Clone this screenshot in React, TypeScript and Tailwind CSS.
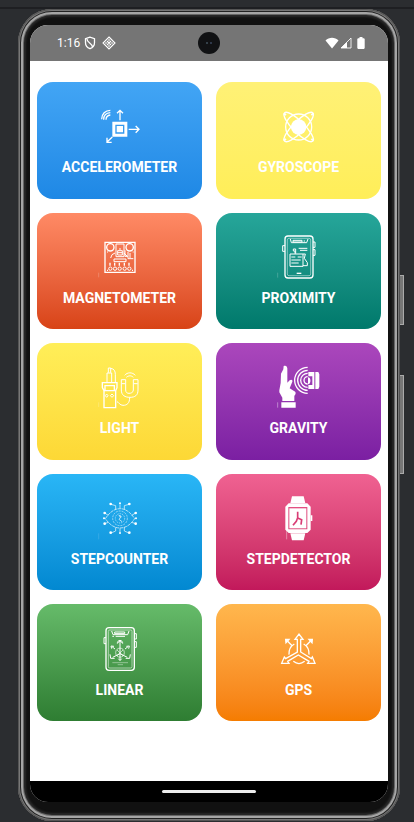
import type { ReactNode } from "react";

type Sensor = {
  name: string;
  tint: string;
  viewBox: string;
  art: ReactNode;
};

const sensors: Sensor[] = [
  {
    name: "ACCELEROMETER",
    tint: "from-[#42a5f5] to-[#1e88e5]",
    viewBox: "17 16 144 144",
    art: (
      <>
        <path fill="currentColor" stroke="none" fillRule="evenodd" d="M66 72h45v45H66zM75 81v27h27V81z" />
        <path fill="currentColor" stroke="none" d="M79 85h19v19H79z" />
        <path d="M89 68V38M80 47l9-9 9 9M115 95h31M136 85l10 10-10 10M66 118l-16 15M50 120v14h14" />
        <path d="M34 65c0-16 11-27 26-27M40 66c0-12 8-20 20-21M47 66c0-8 5-13 13-14" />
      </>
    ),
  },
  {
    name: "GYROSCOPE",
    tint: "from-[#fff176] to-[#ffee58]",
    viewBox: "20 16 144 144",
    art: (
      <>
        <circle cx="91" cy="88" r="23" fill="currentColor" stroke="none" />
        <circle cx="91" cy="88" r="39" />
        <ellipse cx="91" cy="88" rx="60" ry="17" transform="rotate(45 91 88)" />
        <ellipse cx="91" cy="88" rx="60" ry="17" transform="rotate(-45 91 88)" />
        <path d="M46 47l7 5M136 47l-7 5M46 129l7-5M136 129l-7-5" strokeWidth="6" />
      </>
    ),
  },
  {
    name: "MAGNETOMETER",
    tint: "from-[#ff8a65] to-[#d84315]",
    viewBox: "17 13 144 144",
    art: (
      <>
        <path d="M44 38h90v90H44z" />
        <circle cx="60" cy="53" r="11" />
        <circle cx="118" cy="53" r="11" />
        <path d="M77 43h24v38H77zM82 63h14v13H82zM82 69h14M86 58h6M50 67h3M127 67h3M61 85l4-10 9-5M71 88h36v8H71zM104 62v18h9v7h16M101 70l9 9M113 67v13M119 70v15" strokeWidth="3" />
        <path d="M59 99v9M73 99v9M87 99v9M102 99v9M116 99v9" />
        <g strokeWidth="3">
          <circle cx="60" cy="117" r="5" /><circle cx="74" cy="117" r="5" />
          <circle cx="88" cy="117" r="5" /><circle cx="103" cy="117" r="5" />
          <circle cx="117" cy="117" r="5" />
        </g>
        <path d="M50 122h3M125 122h3" />
        <path d="M25 129v14" strokeWidth="2" opacity=".3" />
      </>
    ),
  },
  {
    name: "PROXIMITY",
    tint: "from-[#26a69a] to-[#00796b]",
    viewBox: "20 13 144 144",
    art: (
      <>
        <rect x="50" y="19" width="84" height="126" rx="9" />
        <rect x="57" y="26" width="70" height="112" rx="5" strokeWidth="2" opacity=".7" />
        <path d="M50 48h-7v17h7M134 37h6v16h-6M134 60h6v17h-6M66 28l3 11h46l4-11M74 32h27v5H74zM106 34h4M91 56h26M95 62h22" strokeWidth="3" />
        <path d="M65 73h39v37H65zM69 82h12M88 82h12M69 91h28M69 100h22M104 73h7l-3 13 9 13v9h-13M80 72v-8h-5v-6h7v14" strokeWidth="3" />
        <path d="M85 131h14" />
        <path d="M28 129v15" strokeWidth="2" opacity=".3" />
      </>
    ),
  },
  {
    name: "LIGHT",
    tint: "from-[#ffee58] to-[#fdd835]",
    viewBox: "17 15 144 144",
    art: (
      <>
        <path d="M36 71h44v15l-4 9v51H41V95l-5-9zM44 80h28v15H44z" />
        <path d="M50 70V42h14v28M54 41V27h7v14M61 28c10 1 14 8 14 18v24" strokeWidth="3" />
        <path d="M49 105l4 5-4 5-4-5zM65 105l5 5-5 5-5-5z" strokeWidth="3" />
        <path d="M93 62h13v31c0 8 5 10 10 10s13-2 13-10V62h14v31c0 16-9 22-24 22S93 109 93 93zM94 74h11M130 74h12" strokeWidth="3" />
        <path d="M103 49c8-10 23-10 32 0M108 55c7-6 15-6 21 0M118 115c0 18-8 24-20 24-10 0-12-9-18-11" strokeWidth="3" />
        <path d="M25 130v14" strokeWidth="2" opacity=".3" />
      </>
    ),
  },
  {
    name: "GRAVITY",
    tint: "from-[#ab47bc] to-[#7b1fa2]",
    viewBox: "20 15 144 144",
    art: (
      <>
        <path fill="currentColor" stroke="none" d="M46 21c8-3 12 3 11 11v39l7-7c4-4 10-2 8 4l-8 20 13 8c8 4 5 10 1 15v15H42v-10l-9-16V94l4-22 1-28 7-13zM39 130h43v16H39z" />
        <path d="M118 25a39 39 0 0 0 0 78M118 34a30 30 0 0 0 0 60M118 43a21 21 0 0 0 0 42M118 53a11 11 0 0 0 0 22" strokeWidth="4" />
        <path fill="currentColor" stroke="none" d="M120 39h18v51h-18V78h12V52h-12zM141 39h9l3 7v37l-3 7h-9zM119 55c10 0 10 21 0 21z" />
        <path d="M28 130v16" strokeWidth="2" opacity=".6" />
      </>
    ),
  },
  {
    name: "STEPCOUNTER",
    tint: "from-[#29b6f6] to-[#0288d1]",
    viewBox: "17 17 144 144",
    art: (
      <>
        <g strokeWidth="2">
          <path d="M45 88c12-18 26-30 44-30s32 12 44 30c-12 18-26 28-44 28S57 105 45 88z" strokeDasharray="10 2" />
          <circle cx="89" cy="87" r="22" strokeDasharray="6 3" opacity=".8" />
          <circle cx="89" cy="87" r="14" strokeDasharray="4 3" opacity=".8" />
          <path d="M85 78l8 4-7 8 9 7M89 77v7" />
          <path d="M89 57V45M89 117v11M76 61V49l-14-4M102 61V49l14-4M76 114v11l-14 6M102 114v11l14 6M54 78l-11-7M124 78l12-7M54 99l-11 4M124 99l12 4" />
          <g fill="currentColor" stroke="none">
            <circle cx="89" cy="42" r="3" /><circle cx="61" cy="44" r="4" /><circle cx="117" cy="44" r="4" />
            <circle cx="89" cy="131" r="3" /><circle cx="61" cy="130" r="4" /><circle cx="117" cy="130" r="4" />
            <circle cx="43" cy="71" r="4" /><circle cx="136" cy="71" r="4" /><circle cx="43" cy="103" r="4" /><circle cx="136" cy="103" r="4" />
            <circle cx="41" cy="87" r="3" /><circle cx="137" cy="87" r="3" />
          </g>
        </g>
        <path d="M25 132v18" strokeWidth="2" opacity=".2" />
      </>
    ),
  },
  {
    name: "STEPDETECTOR",
    tint: "from-[#f06292] to-[#c2185b]",
    viewBox: "554 17 144 144",
    art: (
      <>
        <path fill="currentColor" stroke="none" d="M605 21h35l5 21h-45zM600 132h45l-5 21h-35zM661 78h5v17h-5z" />
        <path fill="currentColor" stroke="none" fillRule="evenodd" d="M595 42h56l10 10v69l-10 10h-56l-10-10V52zM594 53v67h57V53z" />
        <path d="M597 57h51v60h-51z" fill="currentColor" stroke="none" />
        <path d="M622 67v18l-4 11-10 12M622 86l12 5-2 15" stroke="#d93d75" strokeWidth="5" />
        <path d="M589 120v30" strokeWidth="2" opacity=".6" />
      </>
    ),
  },
  {
    name: "LINEAR",
    tint: "from-[#66bb6a] to-[#2e7d32]",
    viewBox: "17 20 144 144",
    art: (
      <>
        <rect x="47" y="25" width="85" height="128" rx="9" />
        <rect x="54" y="32" width="71" height="114" rx="4" strokeWidth="2" opacity=".8" />
        <path d="M47 55h-6v18h6M132 43h6v16h-6M132 67h6v17h-6M64 35l4 11h44l4-11M73 38h30v5H73zM76 51h28M66 51h5" strokeWidth="3" />
        <path d="M89 104V65M81 73c-1-13 17-13 16 0M84 70l5-6 5 6M89 103l-22 11M89 103l22 11M74 89l-9-7M104 89l9-7M64 88l-2-8 9 1M115 88l2-8-9 1M89 104v18M84 118l5 6 5-6M59 105l2 12h12M120 105l-2 12h-12" strokeWidth="3" />
        <path d="M76 100c0-18 26-18 26 0s-26 18-26 0M80 92l18 17M98 92l-18 17" strokeWidth="2" />
        <path d="M66 130h47M82 136h16" strokeWidth="2" opacity=".6" />
      </>
    ),
  },
  {
    name: "GPS",
    tint: "from-[#ffb74d] to-[#f57c00]",
    viewBox: "554 20 144 144",
    art: (
      <>
        <path d="M621 98V60h-7l12-16 12 16h-7v38l32 20 3-5 8 19h-22l4-6-32-19-32 19 4 6h-22l8-19 4 5z" />
        <path d="M612 74c-12 7-17 18-16 32M640 74c12 7 17 18 16 32M609 126c11 9 23 9 34 0" />
        <path d="M606 80l-14-14M646 80l14-14" />
        <path d="M586 60h10l-9 10zM666 60h-10l9 10z" fill="currentColor" />
      </>
    ),
  },
];

function SensorCard({ name, tint, viewBox, art }: Sensor) {
  return (
    <button
      type="button"
      className={`flex flex-col items-center justify-center gap-1.5 rounded-2xl bg-linear-to-b text-white ${tint}`}
    >
      <svg
        viewBox={viewBox}
        className="size-12"
        fill="none"
        stroke="currentColor"
        strokeWidth="4"
        aria-hidden="true"
      >
        {art}
      </svg>
      <span className="text-sm leading-5 font-bold">{name}</span>
    </button>
  );
}

function StatusBar() {
  return (
    <header className="relative flex h-9 shrink-0 items-center bg-[#757575] pr-[23px] pl-[27px] text-white">
      <span className="text-xs">1:16</span>
      <svg viewBox="0 0 12 14" className="ml-1 h-3.5 w-3" fill="none" stroke="currentColor" strokeWidth="1.3" aria-hidden="true">
        <path d="M6 1.2L1.5 2.7v4c0 2.700 1.800 5 4.500 6 2.700-1 4.500-3.300 4.500-6v-4z" />
        <path d="M3 3c0 4 5 4 5.500 8" />
      </svg>
      <svg viewBox="0 0 14 14" className="ml-1.5 size-3.5" fill="none" stroke="currentColor" strokeWidth="1.1" aria-hidden="true">
        <path d="M7 1l6 6-6 6-6-6z" />
        <path d="M5 5l4 4M9 5L5 9M7 3v2M7 9v2M3 7h2M9 7h2" />
      </svg>
      <span className="absolute top-[7px] left-1/2 flex size-[22px] -translate-x-1/2 items-center justify-center gap-0.5 rounded-full bg-[#111214]">
        <i className="size-0.5 rounded-full bg-[#40505b]" />
        <i className="size-0.5 rounded-full bg-[#39465c]" />
      </span>
      <svg viewBox="0 0 14 12" className="ml-auto h-3 w-3.5" fill="currentColor" aria-hidden="true">
        <path d="M0.500 3.500C4-.2 10-.2 13.500 3.500L7 11.500z" />
      </svg>
      <svg viewBox="0 0 12 12" className="ml-px size-3" fill="none" stroke="currentColor" aria-hidden="true">
        <path d="M11 1v10H1z" opacity=".85" />
        <path d="M7 5v6H1z" fill="currentColor" stroke="none" />
      </svg>
      <svg viewBox="0 0 8 12" className="ml-[5px] h-3 w-2" fill="currentColor" aria-hidden="true">
        <path d="M2.500 0h3v1.200H7l.7.8v9L7 12H1l-.7-1V2l.7-.8h1.500z" />
      </svg>
    </header>
  );
}

export default function App() {
  return (
    <div className="flex min-h-screen flex-col bg-[#2b2d30] font-[Roboto,sans-serif]">
      <div className="mt-[7px] h-0.5 shrink-0 bg-[#1e1f22]" />
      <div className="flex flex-1 pr-2.5 pb-px pl-[18px]">
        <div className="flex flex-1 flex-col rounded-[34px] bg-[#111] px-3 pt-4 pb-[19px] shadow-[inset_0_0_0_1px_#555,inset_0_0_0_2px_#777,inset_0_0_0_3px_#222,inset_0_0_0_5px_#a5a5a5,inset_0_0_0_6px_#666,inset_0_0_2px_8px_#292929]">
          <div className="flex flex-1 flex-col overflow-hidden rounded-[18px] bg-white">
            <StatusBar />
            <main className="grid flex-1 auto-rows-fr grid-cols-2 gap-3.5 px-[7px] pt-[21px] pb-[60px]">
              {sensors.map((sensor) => (
                <SensorCard key={sensor.name} {...sensor} />
              ))}
            </main>
            <footer className="flex h-[21px] shrink-0 items-center justify-center bg-black">
              <span className="h-[3px] w-[94px] rounded-full bg-[#ededed]" />
            </footer>
          </div>
        </div>
        <div className="flex w-1 flex-col pt-[266px]">
          <span className="h-[50px] border border-l-0 border-[#aaa] bg-[#777]" />
          <span className="mt-[50px] h-[99px] border border-l-0 border-[#aaa] bg-[#777]" />
        </div>
      </div>
    </div>
  );
}
